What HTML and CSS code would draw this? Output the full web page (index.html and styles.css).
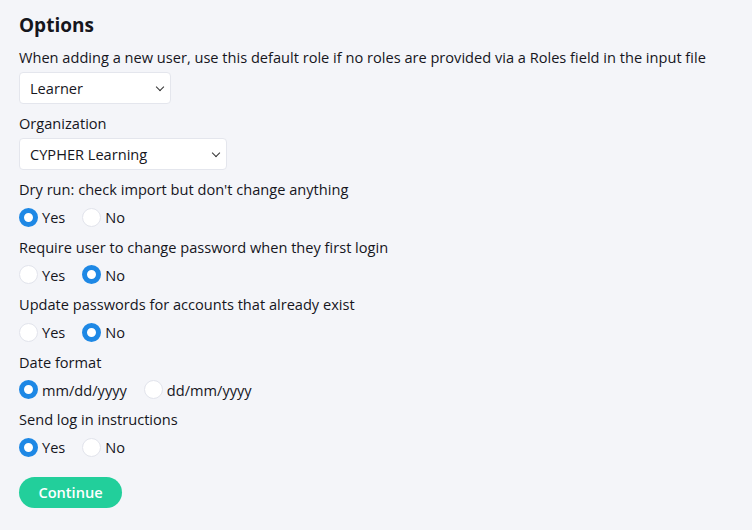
FILE: index.html
```html
<!DOCTYPE html>
<html>
<head>
    <link rel="stylesheet" href="styles.css">
</head>
<body>
    <form class="options">
        <h2>Options</h2>

        <div class="field select-field">
            <div class="field-label">When adding a new user, use this default role if no roles are provided via a Roles field in the input file</div>
            <div class="select-wrap role-select">
                <select name="role">
                    <option>Learner</option>
                    <option>Instructor</option>
                    <option>Administrator</option>
                </select>
            </div>
        </div>

        <div class="field select-field">
            <div class="field-label">Organization</div>
            <div class="select-wrap org-select">
                <select name="organization">
                    <option>CYPHER Learning</option>
                </select>
            </div>
        </div>

        <div class="field">
            <div class="field-label">Dry run: check import but don't change anything</div>
            <div class="choices">
                <label class="choice"><input type="radio" name="dry_run" checked> Yes</label>
                <label class="choice"><input type="radio" name="dry_run"> No</label>
            </div>
        </div>

        <div class="field">
            <div class="field-label">Require user to change password when they first login</div>
            <div class="choices">
                <label class="choice"><input type="radio" name="change_password"> Yes</label>
                <label class="choice"><input type="radio" name="change_password" checked> No</label>
            </div>
        </div>

        <div class="field">
            <div class="field-label">Update passwords for accounts that already exist</div>
            <div class="choices">
                <label class="choice"><input type="radio" name="update_passwords"> Yes</label>
                <label class="choice"><input type="radio" name="update_passwords" checked> No</label>
            </div>
        </div>

        <div class="field">
            <div class="field-label">Date format</div>
            <div class="choices">
                <label class="choice"><input type="radio" name="date_format" checked> mm/dd/yyyy</label>
                <label class="choice"><input type="radio" name="date_format"> dd/mm/yyyy</label>
            </div>
        </div>

        <div class="field">
            <div class="field-label">Send log in instructions</div>
            <div class="choices">
                <label class="choice"><input type="radio" name="send_login" checked> Yes</label>
                <label class="choice"><input type="radio" name="send_login"> No</label>
            </div>
        </div>

        <button type="button" class="btn-continue">Continue</button>
    </form>
</body>
</html>
```

FILE: styles.css
```css
body {
    margin: 0;
    background-color: #f4f5f9;
    font-family: "Open Sans", Arial, sans-serif;
    font-size: 14.6px;
    color: #16161d;
}

.options {
    padding: 10px 19px 20px;
}

h2 {
    margin: 0 0 7px;
    font-size: 19px;
    line-height: 30px;
    font-weight: 700;
}

.field {
    margin-bottom: 9.5px;
}

.field-label {
    line-height: 20px;
    margin-bottom: 8px;
}

.select-field {
    margin-bottom: 9px;
}

.select-field .field-label {
    margin-bottom: 5px;
}

.select-wrap {
    position: relative;
}

.role-select {
    width: 152px;
}

.org-select {
    width: 208px;
}

.select-wrap select {
    appearance: none;
    -webkit-appearance: none;
    display: block;
    width: 100%;
    height: 32px;
    padding: 0 24px 0 10px;
    background-color: #fff;
    border: 1px solid #e4e6ed;
    border-radius: 4px;
    font-family: inherit;
    font-size: 14.6px;
    color: #16161d;
}

/* chevron drawn on top of the select */
.select-wrap::after {
    content: '';
    position: absolute;
    right: 8px;
    top: 12px;
    width: 5px;
    height: 5px;
    border-right: 1.3px solid #333;
    border-bottom: 1.3px solid #333;
    transform: rotate(45deg);
    pointer-events: none;
}

.choices {
    display: flex;
    align-items: center;
    height: 20px;
}

.choice {
    display: flex;
    align-items: center;
    gap: 4px;
    margin-right: 17px;
    cursor: pointer;
}

.choice input {
    appearance: none;
    -webkit-appearance: none;
    margin: 0;
    width: 19px;
    height: 19px;
    border-radius: 50%;
    border: 1px solid #e2e4ec;
    background-color: #fff;
    cursor: pointer;
}

.choice input:checked {
    border: 5px solid #1e88e5;
}

.btn-continue {
    margin-top: 10px;
    width: 103px;
    height: 31px;
    border: none;
    border-radius: 16px;
    background-color: #22cf9b;
    color: #fff;
    font-family: inherit;
    font-size: 14.6px;
    font-weight: 600;
    cursor: pointer;
}

.btn-continue:hover {
    background-color: #1cb888;
}
```
